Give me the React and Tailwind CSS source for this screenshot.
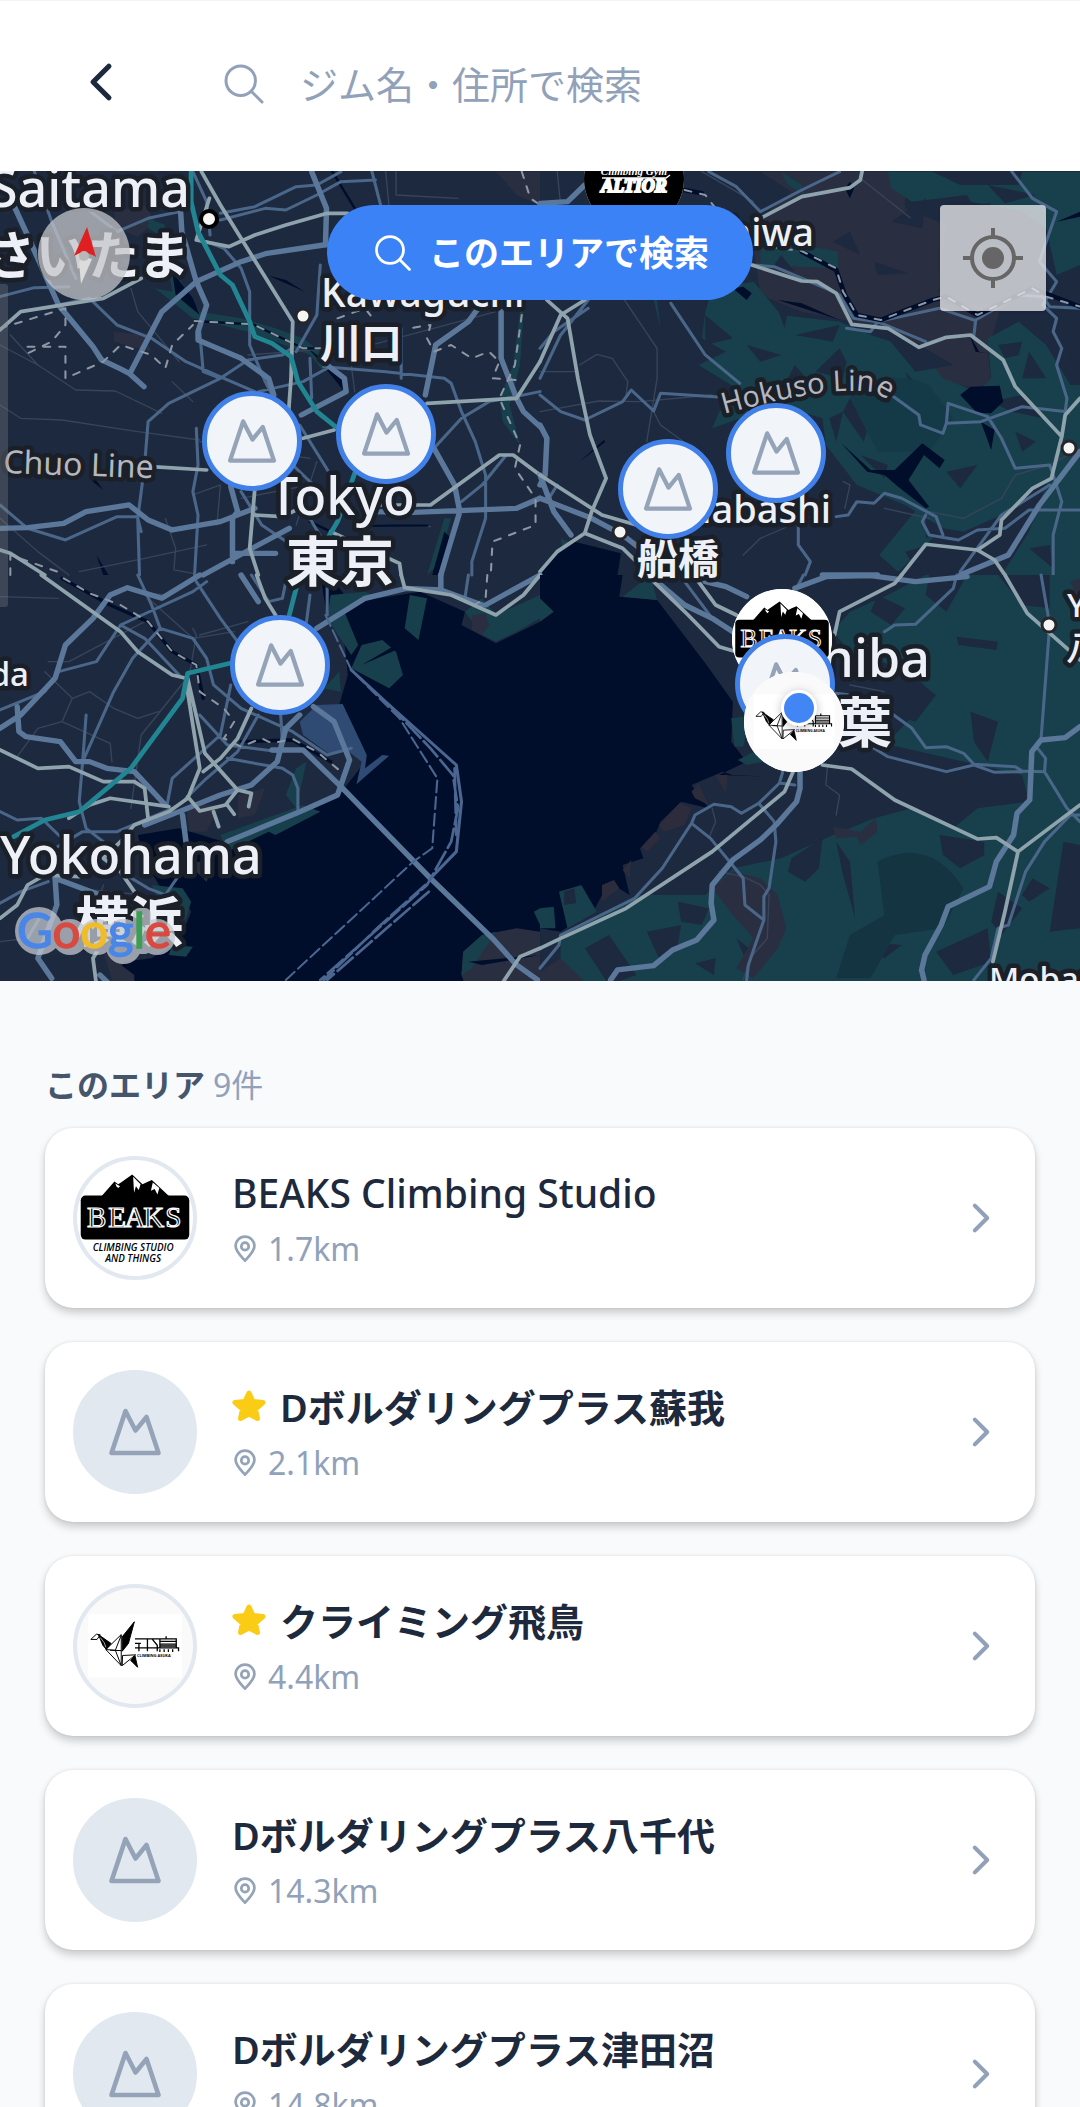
import React from "react";
import {
  IoChevronBack,
  IoChevronForward,
  IoSearchOutline,
} from "react-icons/io5";

const FONT = "font-['Noto_Sans','Noto_Sans_CJK_JP',sans-serif]";

const gyms = [
  { name: "BEAKS Climbing Studio", distance: "1.7km", logo: "beaks", latin: true },
  { name: "Dボルダリングプラス蘇我", distance: "2.1km", favorite: true },
  { name: "クライミング飛鳥", distance: "4.4km", logo: "asuka", favorite: true },
  { name: "Dボルダリングプラス八千代", distance: "14.3km" },
  { name: "Dボルダリングプラス津田沼", distance: "14.8km" },
];

const pins = [
  { x: 634, y: 8, name: "ALTIOR", logo: "altior" },
  { x: 252, y: 270, name: "東京西" },
  { x: 386, y: 263, name: "東京" },
  { x: 776, y: 282, name: "Dボルダリングプラス八千代" },
  { x: 668, y: 318, name: "Dボルダリングプラス津田沼" },
  { x: 280, y: 494, name: "品川" },
  { x: 782, y: 468, name: "BEAKS Climbing Studio", logo: "beaks" },
  { x: 785, y: 513, name: "Dボルダリングプラス蘇我" },
  { x: 794, y: 551, name: "クライミング飛鳥", logo: "asuka" },
];

function Mountain({ className }) {
  return (
    <svg viewBox="0 0 60 60" className={className} fill="none" stroke="#94a3b8" strokeWidth="4.6" strokeLinejoin="round" aria-hidden="true">
      <path d="M20.500 9 L30.500 28.500 L41.500 15 L53.500 51 H6.500 Z" />
    </svg>
  );
}

function PinIcon() {
  return (
    <svg viewBox="0 0 22 28" className="h-7 w-[22px]" fill="none" stroke="#94a3b8" strokeWidth="2.7" strokeLinejoin="round" aria-hidden="true">
      <path d="M11 25.6 C8.6 22.8 1.6 16.6 1.6 11 A9.4 9.4 0 0 1 20.4 11 C20.4 16.6 13.4 22.8 11 25.6 Z" />
      <circle cx="11" cy="11.4" r="3.7" />
    </svg>
  );
}

function Star() {
  return (
    <svg viewBox="0 0 36 36" className="size-9" fill="#facc15" stroke="#facc15" strokeWidth="5" strokeLinejoin="round" role="img" aria-label="お気に入り">
      <path d="M17 4 L21 12.500 L31 13.500 L23.500 20 L25.500 29.500 L17 25 L8.500 29.500 L10.500 20 L3 13.500 L13 12.500 Z" />
    </svg>
  );
}

function BeaksLogo() {
  return (
    <svg viewBox="0 0 124 124" className="size-full" aria-label="BEAKS">
      <rect width="124" height="124" fill="#fff" />
      <path d="M25 40 L40 23 L44 26 L47 24 L59 15.5 L70 26 L74 24 L80 21.5 L100 40 Z" />
      <path d="M60 18 L68 26 L66 32 L63 28 L61 35 Z M81 24 L88 30 L86 37 L83 31 L79 33 Z M41 25 L46 28 L44 30 L42 28 Z" fill="#fff" />
      <rect x="4" y="38" width="116" height="47" rx="5" />
      <text y="72" x="21 43 62 82 103" fontSize="31" fontFamily="Liberation Serif, serif" fill="#000" stroke="#fff" strokeWidth="1.3" textAnchor="middle">BEAKS</text>
      <text x="60" y="97" textAnchor="middle" fontSize="10.500" fontStyle="italic" fontFamily="Open Sans, sans-serif" fontWeight="600">CLIMBING STUDIO</text>
      <text x="60" y="109" textAnchor="middle" fontSize="10.500" fontStyle="italic" fontFamily="Open Sans, sans-serif" fontWeight="600">AND THINGS</text>
    </svg>
  );
}

function AsukaLogo() {
  return (
    <svg viewBox="24 12 372 372" className="size-full scale-105" aria-label="飛鳥">
      <rect x="0" y="0" width="400" height="400" fill="#fafafa" />
      <rect x="67" y="100" width="286" height="194" fill="#fff" />
      <g stroke="#000" strokeWidth="3" strokeLinejoin="round" fill="none">
        <path d="M75 178 L92 162 L104 164 L94 178 Z" />
        <path d="M98 163 L122 180 L137 190 L122 208 L112 196 Z" fill="#000" />
        <path d="M104 172 L116 188 L121 202" stroke="#fff" strokeWidth="2" />
        <path d="M168 163 L121 209 L168 258 Z M121 209 L150 211 L168 165 M150 211 L168 258 M134 211 L168 212" />
        <path d="M208 124 L171 170 V214 L190 190 Z" fill="#000" />
        <path d="M172 227 L212 225 L171 258 Z" />
        <path d="M197 242 L210 228 L218 263 Z" fill="#000" />
      </g>
      <g stroke="#000" strokeWidth="4" fill="none">
        <path d="M210 176 H284 M210 204 H345 M210 190 H228 M222 190 V214 M248 176 V214 M262 176 L278 196 V214 M286 178 V202 M284 176 H336 V204 M284 184 H336 M284 192 H336 M284 198 H336 M305 168 V176 M343 202 V214 M286 208 V216 M299 208 V216 M312 208 V216 M325 208 V216" />
      </g>
      <text x="216" y="232" fontSize="12" fontWeight="700" fontFamily="Open Sans, sans-serif">CLIMBING ASUKA</text>
    </svg>
  );
}

function AltiorLogo() {
  return (
    <svg viewBox="0 0 100 100" className="size-full" aria-label="ALTIOR">
      <rect width="100" height="100" />
      <text x="50" y="46" textAnchor="middle" fontSize="11" fontWeight="700" fontStyle="italic" fill="#fff" fontFamily="Liberation Serif, serif">Climbing Gym</text>
      <path d="M18 49 H82 L86 46" stroke="#fff" strokeWidth="1.5" fill="none" />
      <text x="50" y="63" textAnchor="middle" fontSize="18" fontWeight="700" fontStyle="italic" fill="#fff" stroke="#fff" strokeWidth="2" fontFamily="Liberation Serif, serif">ALTIOR</text>
    </svg>
  );
}

function Logo({ kind }) {
  if (kind === "beaks") return <BeaksLogo />;
  if (kind === "asuka") return <AsukaLogo />;
  return <AltiorLogo />;
}

function GymPin({ pin }) {
  const place = { left: `${(pin.x / 1080) * 100}%`, top: `${(pin.y / 810) * 100}%` };
  return pin.logo ? (
    <button aria-label={pin.name} style={place} className="absolute size-[100px] -translate-x-1/2 -translate-y-1/2 overflow-hidden rounded-full bg-white">
      <Logo kind={pin.logo} />
    </button>
  ) : (
    <button aria-label={pin.name} style={place} className="absolute flex size-[100px] -translate-x-1/2 -translate-y-1/2 items-center justify-center rounded-full border-[5px] border-[#4080e8] bg-slate-100">
      <Mountain className="size-14" />
    </button>
  );
}

function MapDrawing() {
  const thick = { stroke: "#5b7799", strokeWidth: 16 };
  const mid = { stroke: "#4a6688", strokeWidth: 9 };
  const rail = { stroke: "#8fa3ad", strokeWidth: 11 };
  const fine = { stroke: "#37445a", strokeWidth: 4 };
  const dash = { stroke: "#8d96a3", strokeWidth: 6, strokeDasharray: "20 26" };
  const teal = { stroke: "#218592", strokeWidth: 14 };
  return (
    <svg viewBox="0 171 1080 810" preserveAspectRatio="xMidYMid slice" className="block size-full" role="img" aria-label="地図">
      <rect y="171" width="1080" height="810" fill="#1c293f" />

      {/* north-west land */}
      <g transform="translate(0 165) scale(.3444 .3333)" fill="none" strokeLinejoin="round" strokeLinecap="round">
        <g stroke="none">
          <path fill="#2a2e41" d="M330 140 L420 120 450 170 400 215 340 190 Z M1440 20 L1568 20 1568 120 1500 90 Z M330 500 L420 510 440 560 330 530 Z" />
          <path fill="#17404c" d="M430 160 L480 180 470 215 430 190 Z M490 310 L520 340 580 440 700 460 800 490 880 520 930 560 940 620 900 570 800 530 720 500 560 460 450 370 500 380 Z M1510 440 L1520 440 1510 600 1480 720 1510 840 1460 770 1450 700 1490 600 Z M1290 1060 L1310 1060 1270 1200 1240 1230 Z" />
          <path fill="#000e2b" d="M500 320 L560 400 580 450 510 390 Z M780 332 L830 345 885 380 Z M260 920 L300 975 270 950 Z M890 545 L1005 640 1000 680 930 590 Z M280 1170 L315 1230 300 1230 Z M1290 1100 L1310 1120 1280 1230 1255 1230 Z" />
        </g>
        <g {...fine}>
          <path d="M0 720 L60 760 180 765 400 800 580 825 M0 540 L110 600 220 675 335 678 470 745 M30 510 L110 600 M720 570 L850 560 1080 540 1440 440 M1150 20 L1150 90 1330 100 M500 650 L560 710 M580 830 L700 850 900 880 M560 990 L640 960 630 1080 M0 1060 L110 1160 200 1230 M480 1060 L510 1150 505 1215 560 1225 M230 1220 L420 1180 600 1140 M1120 20 L1130 130 M380 370 L400 440 520 590 M700 1000 L900 960 M1020 600 L1030 680 M1080 1080 L1250 1085 M920 890 L860 1080" />
          <path stroke="#000e2b" strokeWidth="7" d="M965 20 L1030 130 M1080 1082 H1240 M900 1070 L960 1100 M565 468 L735 478 880 550 950 550" />
        </g>
        <g {...mid}>
          <path d="M0 395 L100 368 200 365 M100 20 L150 170 220 340 M640 145 L740 125 860 65 920 60 990 20 M640 165 L770 130 830 135 920 90 990 50 1090 45 M1080 20 L1110 140 M170 420 L260 400 340 480 440 520 540 590 650 640 740 680 M600 230 L650 250 700 310 725 380 725 540 770 650 795 700 M640 640 L490 715 430 770 420 900 400 1060 405 1230 M640 640 L720 585 820 570 845 550 M570 790 L575 900 560 980 575 1050 565 1230 M0 1020 L80 1090 190 1125 340 1055 400 1055 M940 605 L1120 620 1290 640 1310 655 1340 740 1380 830 1410 930 1410 1060 1370 1190 1370 1230 M1165 490 V640 M750 680 L880 650 950 610 M860 560 L920 450 930 300 M1260 850 L1340 760 1420 710 1568 680 M1470 870 L1400 960 1340 1010 M580 500 L590 620 640 640 M250 130 L340 200 430 160 520 140 M900 580 L905 700 M870 780 L930 880 960 930 M850 900 L920 970 M560 20 L600 110 610 210 M700 980 L760 1080 860 1150 M400 1060 L410 1100 M865 1000 L940 1130" />
        </g>
        <g {...thick}>
          <path d="M35 110 L75 200 170 420 270 545 295 585 350 612 375 625 418 665 M380 620 L410 560 470 440 570 350 700 290 775 265 940 240 M522 100 L528 200 570 350 600 420 575 500 575 525 620 545 700 580 780 640 795 690 M905 20 L948 130 945 240 M875 750 L1005 680 1000 640 950 600 M1235 690 L1265 540 1360 470 1410 400 M1455 440 V580 L1500 700 1520 740 1568 785 M1260 850 L1320 960 1335 1040 1300 1160 1280 1230 M0 1090 L80 1088 185 1075 250 1040 375 1020 430 1065 500 1095 640 1070 740 1030 M1070 1040 L1200 1042 1500 1030 1568 1000 M670 965 L690 1040 675 1060 675 1190 M680 1165 H800 M590 1230 L750 1140 840 1090" />
        </g>
        <g {...dash}>
          <path d="M0 490 L190 430 190 480 150 530 80 565 M80 545 H190 L190 640 300 590 350 540 440 570 480 610 500 540 560 480 M565 468 L735 478 880 550 950 550 M1515 20 L1540 100 1568 120 M980 460 L1060 430 1090 470 M1200 488 L1250 480 1240 520 1260 560 1310 540 1370 580 1420 560 1450 590 1430 640 1500 645 M1515 450 L1495 600 1450 700 1510 840 1495 910 1555 1000 1555 1080 1430 1130 1425 1230 M30 1230 V1170 L180 1225" />
        </g>
        <g {...rail}>
          <path d="M585 20 L640 120 850 470 845 640 838 740 M608 100 L570 225 665 245 740 210 830 180 950 145 1010 145 M0 495 L60 440 300 400 410 340 M880 820 L970 795 M1240 715 L1500 700 1568 590 M1100 1020 H1250 L1450 870 1490 870 1568 930 M440 905 L600 915 M740 970 L725 1150 750 1230 M740 1050 L820 1055 870 1030 M0 1155 L30 1165 130 1230 M960 1100 L1160 1195 1165 1230" />
        </g>
        <g {...teal}>
          <path d="M555 20 V110 L575 200 640 330 675 360 725 470 740 515 790 535 845 575 865 650 920 740 980 790 M1030 925 L980 1070 940 1140 870 1230" />
        </g>
      </g>

      {/* north-east hills */}
      <g transform="translate(540 165) scale(.3444 .3333)" fill="none" strokeLinejoin="round" strokeLinecap="round">
        <g stroke="none">
          <path fill="#2a2e41" d="M640 20 L1010 20 1060 60 1060 130 1180 180 1160 380 1180 420 1340 420 1300 560 1310 650 1270 670 1170 650 1110 540 1000 490 910 470 760 440 640 390 620 250 640 160 730 80 Z" />
          <path fill="#17404c" d="M700 20 L760 60 770 90 720 60 Z M1010 20 H1568 V300 L1500 330 1470 190 1400 140 1250 110 1240 90 1080 110 1020 70 Z M640 180 L720 230 865 260 865 310 640 300 Z M330 405 L350 490 340 405 Z M500 370 L620 350 700 450 870 470 960 510 1110 560 1170 640 1270 680 1310 640 1300 520 1390 470 1470 540 1540 660 1568 660 V1030 L1470 940 1340 1050 1230 1100 1170 1090 1060 1020 920 960 830 840 820 760 690 720 500 790 520 740 600 690 540 650 460 600 540 560 470 520 480 440 Z M985 1170 L1120 1000 1120 1120 1150 1110 1040 1220 Z M1490 900 L1568 850 V1230 H1340 L1420 1100 Z M60 1120 L150 1160 140 1210 70 1180 Z" />
          <path fill="#1c293f" d="M470 20 L560 20 620 110 590 120 Z M480 450 L560 520 480 540 Z M690 430 L720 440 710 490 Z M740 510 L870 480 850 530 Z M870 550 L890 590 880 640 800 620 Z M900 700 L960 760 940 830 880 740 Z M1010 520 L1060 515 1200 600 1090 620 Z M1140 20 L1400 20 1390 60 1220 60 Z M1060 620 L1130 700 1100 720 Z M1330 540 L1400 530 1390 570 1350 580 Z M1420 560 L1470 640 1400 640 Z M1310 710 L1400 690 1460 760 1370 740 Z M840 760 L880 740 860 830 Z M930 870 L1010 900 1000 940 Z M1180 920 L1270 900 1220 970 Z M1380 800 L1440 830 1400 860 Z M1060 1160 L1130 1140 1100 1230 Z M1420 1150 L1480 1140 1490 1210 Z M1300 60 L1440 90 1350 115 Z M1240 180 L1240 120 1310 115 Z M1500 420 L1568 480 1540 580 Z M600 540 L700 570 640 590 Z M740 600 L790 660 720 640 Z M660 700 L730 660 740 700 Z M900 200 L930 270 850 230 Z M970 290 L1070 325 980 330 Z M1020 170 L1120 100 1110 190 Z M700 270 L740 320 680 300 Z" />
          <path fill="#153a47" d="M900 700 Q1000 600 1130 660 L1200 760 1130 860 980 860 Z" />
          <path fill="#000e2b" d="M690 405 L760 415 870 465 Z M900 50 L912 70 900 100 885 70 Z M1220 690 L1250 665 1335 662 1345 710 1310 745 1270 745 Z M875 835 L960 915 1030 915 1110 835 1175 885 1160 910 1115 870 1070 945 1130 1025 1120 1030 1040 965 1000 930 950 920 Z M1280 770 L1320 795 1310 855 Z M560 370 L590 365 615 385 600 405 Z M115 890 L185 825 190 830 Z M0 1230 L50 1160 100 1130 235 1165 225 1230 Z M1500 170 L1568 140 1568 155 Z M1245 505 L1275 560 1300 565 1265 560 Z" />
        </g>
        <g {...fine}>
          <path d="M245 405 L340 550 340 640 310 830 M115 600 L165 568 210 580 255 650 250 690 M0 740 L170 708 290 710 500 690 M330 740 L350 780 430 840 M0 620 L110 620 M930 40 L1075 158 M880 950 L900 960 885 1030 M590 1170 L640 1120 820 1040 M1130 1040 L1230 1060 1340 1000 1380 930 1480 900 1568 850 M50 20 L60 120 M470 20 L620 110 M1000 1030 L1130 1060" />
        </g>
        <g {...mid}>
          <path d="M0 690 L60 740 130 765 240 710 265 675 330 738 350 685 530 697 M380 415 L480 570 580 655 M490 20 L570 65 640 140 760 75 870 20 M620 300 L680 305 830 370 870 390 910 460 980 470 1160 430 1260 465 M890 490 L960 500 980 470 M980 470 L1120 530 M1260 510 L1265 465 1390 390 1460 395 1480 425 1568 430 M1370 20 L1430 100 1500 140 1450 290 1500 350 1460 420 1500 460 1490 500 1515 550 1500 600 1530 700 1525 740 M1020 690 L1100 750 1105 780 1170 805 1180 775 1280 770 1400 725 1530 740 M1180 775 L1185 715 1300 755 1340 820 1380 910 1480 900 1490 930 1515 1010 1490 1110 1490 1230 M860 1055 L895 1050 920 1010 970 1015 1000 985 1050 1000 1150 1055 1170 1110 M1120 1050 L1110 1070 1130 1110 1215 1125 1270 1095 1350 1090 1420 1035 1568 1035 M750 1080 V1140 L785 1190 770 1230 M0 550 L40 500 140 430 M140 405 L60 510 0 640 M1220 1220 L1340 1050 1480 960 M20 1010 L50 960" />
        </g>
        <g {...thick}>
          <path d="M0 115 L80 110 130 60 M0 780 L20 820 15 930 0 960 M0 930 L40 1040 90 1110 M0 1000 L150 1060 240 1110 290 1150 M820 1230 H980 M1568 860 L1450 1020 1360 1170 1220 1230" />
        </g>
        <g stroke="#000e2b" strokeWidth="14">
          <path d="M760 260 L860 315 885 390 920 450 990 465 1140 405 1180 395 1270 450 1430 370 1568 425 M420 75 L470 85" />
        </g>
        <g {...dash}>
          <path d="M420 75 L480 90 510 130 M620 240 L760 258 860 310 880 380 920 450 990 465 1140 405 1180 395 1270 450 1430 370 1470 395 1568 425" />
        </g>
        <g {...rail}>
          <path d="M935 20 L930 45 900 68 760 95 640 160 M615 300 L760 348 805 350 860 385 905 478 1010 490 1100 547 1180 517 1250 510 1345 585 1380 665 1515 815 1525 750 1568 700 M20 405 L80 460 110 640 145 810 192 940 150 1040 130 1105 M0 590 L60 450 130 405 M1515 815 L1485 940 1430 970 1340 1065 1335 1110 1270 1155 1120 1138 1050 1230 M0 930 L180 1050 280 1080 M0 1220 L50 1160 130 1105 240 1150 280 1190 M1270 1155 L1320 1185 1350 1230" />
        </g>
      </g>

      {/* bay, south-west */}
      <g transform="translate(0 575) scale(.3444 .3333)" fill="none" strokeLinejoin="round" strokeLinecap="round">
        <g stroke="none">
          <path fill="#000e2b" d="M930 0 L950 130 1000 200 1010 300 985 390 1060 560 985 660 880 710 820 740 650 800 520 760 400 780 420 860 480 960 530 960 555 1010 520 1100 440 1150 360 1160 330 1230 H1568 V140 L1440 205 1340 150 1350 110 1220 50 1100 70 1000 60 960 0 Z" />
          <path fill="#17404c" d="M960 60 L1060 50 1080 60 1000 110 1040 210 1020 240 950 130 Z M1190 60 L1240 70 1215 195 1175 160 Z M1020 280 L1050 210 1110 195 1150 230 1170 300 1130 340 Z M1350 110 L1400 70 1440 120 1568 60 1568 130 1500 170 1440 200 1400 180 Z M640 780 L880 690 930 710 800 780 780 770 660 830 Z M440 930 L530 940 555 980 540 1030 500 1060 Z M500 1110 L560 1115 540 1145 490 1140 Z M860 580 L890 560 860 700 830 660 Z M985 290 L990 350 940 340 Z" />
          <path fill="#2a2e41" d="M1340 1200 L1345 1130 1400 1080 1500 1060 1568 1070 V1230 H1350 Z M540 690 L640 690 600 770 550 770 Z M690 660 L770 640 740 720 690 730 Z M540 860 L620 860 600 920 Z M300 1130 L390 1200 390 1230 330 1230 Z M1370 120 L1410 115 1420 150 1400 180 1370 165 Z" />
          <path fill="#17404c" d="M1340 1200 L1345 1130 1400 1080 1440 1070 1370 1180 Z M1550 1010 L1568 1000 V1050 Z" />
          <path fill="#000e2b" d="M1360 1160 L1568 1140 1400 1170 Z M1050 270 L1150 225 1140 215 Z" />
          <path fill="#2f4a73" d="M870 440 L920 390 995 387 1065 540 1060 580 1110 540 1130 542 1035 628 1050 560 1000 520 960 540 880 480 Z" />
        </g>
        <g {...fine}>
          <path d="M0 65 L170 70 M130 290 L210 370 260 350 330 400 400 430 460 410 M180 440 L320 505 325 560 M50 545 L110 460 180 440 210 370 M420 60 L560 190 680 170 M560 160 L570 180 550 300 410 480 380 700 M140 260 L200 260 420 140 M580 180 L720 140 M390 50 L480 60 M0 1100 L80 1090 M220 940 L420 960 M280 1000 L300 930" />
        </g>
        <g stroke="#000e2b" strokeWidth="10">
          <path d="M180 10 L320 90 430 140 500 230 570 270 590 370 M700 500 L850 495 960 560" />
        </g>
        <g {...mid}>
          <path d="M400 0 L440 90 465 160 385 250 330 350 240 560 230 680 250 760 300 800 M0 405 L130 350 170 290 280 260 350 150 560 50 600 20 M570 20 L640 130 690 200 M350 150 L420 190 520 300 M465 160 L560 190 600 250 620 330 700 400 850 470 950 540 1020 520 M670 330 L640 480 500 610 485 690 M580 420 L660 510 810 530 M660 550 L820 580 850 600 865 640 V710 M750 420 L690 530 600 610 540 670 M0 710 L50 735 120 730 180 790 M160 820 L240 770 340 770 500 700 M350 890 L430 940 480 960 520 900 M0 985 L60 950 140 920 M815 420 L820 500 M900 60 L890 140 M950 0 V120 M1360 0 L1350 70 M240 560 L250 420 M730 0 L780 80 820 70 830 20 M120 1020 L80 1090" />
        </g>
        <g {...thick}>
          <path d="M580 0 L470 70 370 38 320 60 270 130 190 210 160 310 60 420 0 460 M50 395 L55 470 75 485 175 500 220 560 260 560 310 580 390 590 480 690 M920 160 L1060 70 1180 40 1280 45 1400 90 M1280 0 V45 M1410 90 L1568 0 M910 395 L970 440 1015 555 980 660 860 715 660 800 M870 420 L830 460 805 560 730 630 640 660 520 710 420 750 M790 525 H880 L990 635 1250 910 1430 1090 1500 1170 1568 1220 M530 720 L540 800 M700 0 L750 80 M160 910 L165 990 110 1150 150 1210 M160 910 L290 960 M290 1200 L320 1230" />
        </g>
        <g {...dash}>
          <path d="M185 10 L260 55 350 90 430 140 500 230 570 270 580 350 650 400 680 440 650 490 700 515 760 490 790 505 850 492 920 530 990 590 M1415 0 L1410 70 1360 100" />
        </g>
        <g stroke="#4b6690" strokeWidth="6">
          <path strokeDasharray="36 14" d="M945 120 L1020 285 1160 430 1270 610 1255 820 1200 860 830 1215" />
          <path strokeWidth="9" d="M1020 285 L1130 390 1260 510 1325 570 1340 680 1325 830 1250 910" />
          <path strokeWidth="8" strokeDasharray="60 14" d="M1130 390 L1250 520 1315 600 1330 700 1310 800 1240 930 930 1215 M1245 950 L950 1215 M1235 930 L1100 1055 940 1215 M1320 580 L1325 780" />
        </g>
        <g {...rail}>
          <path d="M120 0 L350 170 400 230 500 300 540 310 M745 0 L770 70 800 120 M730 400 L690 490 640 550 590 590 M540 320 L580 580 545 670 490 710 390 750 M545 310 L595 535 690 645 730 655 722 695 M0 525 L110 580 200 575 300 620 390 620 420 640 430 730 M200 730 L260 690 320 670 490 695 M545 665 L580 708 655 690 690 645 M620 710 L635 755 M660 690 L680 718 M390 750 L350 800 300 850 350 890 390 950 M0 1030 L50 990 80 930 130 900 230 905 M1165 0 L1175 38 1310 60 1440 120 1520 60 1568 0 M1455 1230 L1510 1145 1568 1120 M300 1100 L270 1150 280 1230" />
        </g>
        <g {...teal}>
          <path d="M870 0 L840 120 M680 262 L545 295 530 370 380 580 230 710 130 735 40 785" />
        </g>
      </g>

      {/* peninsula, south-east */}
      <g transform="translate(540 575) scale(.3444 .3333)" fill="none" strokeLinejoin="round" strokeLinecap="round">
        <g stroke="none">
          <path fill="#17404c" d="M850 170 L900 110 1010 60 1120 0 H1568 V1230 H60 L60 1100 140 1040 280 960 480 960 560 880 700 850 830 790 970 730 1080 700 1020 620 1030 480 1140 360 1080 290 900 230 Z" />
          <path fill="#1c293f" d="M980 60 L1060 100 1020 150 960 110 Z M1130 0 L1240 0 1180 110 1120 60 Z M1330 0 L1480 0 1480 100 1400 90 Z M1210 185 L1330 200 1325 225 1215 210 Z M1250 410 L1330 440 1300 560 1260 500 Z M900 330 L1100 320 1150 360 1090 440 1000 410 Z M880 480 L1060 520 1400 600 1420 680 1270 700 1200 760 1060 690 940 620 860 600 Z M1160 780 L1290 800 1290 840 1220 880 1170 840 Z M860 800 L900 860 915 1030 880 900 Z M730 850 L820 790 810 880 770 920 720 890 Z M1520 800 L1568 810 V1060 L1480 1070 Z M1060 1010 L1085 1060 1035 1055 Z M1430 910 L1480 940 1420 980 1400 960 Z M1330 950 L1400 1000 1340 1080 1310 1040 Z M1150 1130 L1300 1060 1310 1160 1200 1200 Z M940 1100 L1050 1110 1000 1150 Z M450 1165 L510 1150 505 1200 Z M310 1070 L410 1050 400 1110 350 1160 Z M570 1090 L620 1130 600 1160 Z M130 1120 L200 1080 280 1200 200 1230 Z M400 980 L490 1000 470 1050 410 1040 Z" />
          <path fill="#153441" d="M980 860 Q1130 780 1230 940 L1170 1060 1030 1080 960 1210 H860 L900 1080 1000 1020 Z" />
          <path fill="#2a2e41" d="M850 755 L930 770 975 730 980 770 930 810 920 785 860 790 Z M500 940 L560 890 640 910 690 960 715 1060 690 1120 620 1210 570 1180 620 1090 560 1020 Z M0 1190 L60 1150 140 1230 H0 Z M1540 20 L1568 10 V80 Z" />
          <path fill="#000e2b" d="M0 0 H240 L230 65 340 75 480 265 560 380 555 500 600 560 520 600 660 605 560 600 530 590 440 630 490 700 410 680 350 740 330 790 290 820 300 850 240 870 260 960 200 920 160 1000 60 1070 0 1060 Z" />
          <path fill="#17404c" d="M240 65 L320 0 340 75 Z M0 70 L40 110 0 140 Z M55 950 L120 930 165 1010 80 1060 Z M555 430 L590 425 600 470 590 515 565 515 Z M575 555 L620 530 650 560 600 570 Z M0 1000 L40 995 45 1060 0 1060 Z" />
          <path fill="#1c293f" d="M70 950 L100 940 105 985 70 990 Z" />
          <path fill="#2c2c3c" d="M440 650 L460 625 490 690 450 670 Z M345 750 L405 685 440 700 420 750 360 770 Z M295 815 L335 770 350 790 310 830 Z M240 885 L265 855 260 910 Z M180 930 L215 915 230 940 180 980 Z M510 600 L545 600 540 655 Z" />
        </g>
        <g {...fine}>
          <path d="M835 570 L830 630 870 660 860 720 M520 890 L590 905 640 930 665 960 660 1090 610 1150 590 1215 M500 700 L510 740 490 790 M900 330 L1000 350" />
        </g>
        <g {...mid}>
          <path d="M420 20 L500 130 560 170 M765 0 L740 50 M1000 170 L1030 150 1090 148 1200 40 1210 0 M860 355 L940 365 1000 400 1080 460 1120 518 1180 515 1230 535 1260 568 1380 575 1400 588 1465 590 1530 700 1568 740 M970 520 L1010 545 1180 590 1260 570 1320 592 1400 590 M1465 590 L1468 550 1445 520 M1455 0 L1480 150 1455 490 M705 590 L695 625 635 685 585 715 555 695 505 688 450 720 440 745 355 880 275 970 60 1080 55 1110 0 1180 M440 745 L495 790 590 910 595 990 650 1035 M635 685 L680 740 685 800 665 940 650 965 650 1035 605 1170 600 1215 M700 625 L740 630 M1540 720 L1465 800 1410 890 1360 1050 1330 1060 1310 1150 1260 1215 M1540 720 H1568" />
        </g>
        <g {...thick}>
          <path d="M340 20 L420 90 500 130 560 170 M480 20 L540 35 600 65 M740 40 L830 5 960 2 1090 20 1240 5 M755 590 V640 L745 680 690 745 640 795 560 855 500 930 497 985 505 1035 455 1095 385 1125 330 1172 225 1185 205 1215 M1568 455 L1525 488 1455 495 1428 530 1422 675 1385 715 1375 780 1325 860 1305 935 1185 995 1165 1050 1118 1140 1108 1185 1115 1215" />
        </g>
        <g {...rail}>
          <path d="M330 20 L430 120 520 215 570 230 M460 20 L510 90 570 120 M1050 0 L1030 25 870 110 855 180 M1350 0 L1415 115 1568 255 M735 590 L710 650 500 830 250 1000 60 1090 0 1120 M820 570 L905 582 1030 675 1270 792 1325 788 1388 830 1568 690 M1388 830 L1350 1010 1315 1160" />
        </g>
      </g>

      {/* towns */}
      <g fill="#f5f5f5" stroke="#26262a" strokeWidth="3">
        <circle cx="209" cy="219" r="8" stroke="#000" strokeWidth="4" />
        <circle cx="303" cy="316" r="7" />
        <circle cx="1069" cy="448" r="7" />
        <circle cx="620" cy="532" r="7" />
        <circle cx="1049" cy="625" r="7" />
      </g>

      {/* labels */}
      <g fill="#eef0f7" stroke="#1b1f28" strokeWidth="9" strokeLinejoin="round" paintOrder="stroke" fontFamily="Noto Sans, Noto Sans CJK JP, sans-serif" fontWeight="500">
        <text x="190" y="207" fontSize="52" textAnchor="end">Saitama</text>
        <text x="190" y="275" fontSize="52" textAnchor="end" fontWeight="700">さいたま</text>
        <text x="321" y="307" fontSize="39">Kawaguchi</text>
        <text x="320" y="358" fontSize="41" fontWeight="700">川口</text>
        <text x="814" y="246" fontSize="38" textAnchor="end">Kashiwa</text>
        <text x="269" y="515" fontSize="52">Tokyo</text>
        <text x="286" y="582" fontSize="54" fontWeight="700">東京</text>
        <text x="831" y="523" fontSize="38" textAnchor="end">Funabashi</text>
        <text x="637" y="574" fontSize="41" fontWeight="700">船橋</text>
        <text x="930" y="677" fontSize="52" textAnchor="end">Chiba</text>
        <text x="892" y="743" fontSize="54" textAnchor="end" fontWeight="700">千葉</text>
        <text x="0" y="874" fontSize="52">Yokohama</text>
        <text x="75" y="942" fontSize="54" fontWeight="700">横浜</text>
        <text x="29" y="686" fontSize="33" textAnchor="end">da</text>
        <text x="989" y="991" fontSize="33">Mobara</text>
        <text x="1067" y="617" fontSize="33">Y</text>
        <text x="1066" y="660" fontSize="34">八</text>
        <g fill="#b4b7bf" fontWeight="400">
          <text x="3" y="473" fontSize="32" transform="rotate(2 3 473)">Chuo Line</text>
          <path id="hokuso" d="M724 414 C760 404 810 392 845 391 S876 394 898 406" fill="none" stroke="none" />
          <text fontSize="29"><textPath href="#hokuso">Hokuso Line</textPath></text>
        </g>
      </g>

      {/* scroll strip */}
      <rect x="-8" y="284" width="16" height="323" rx="3" fill="#8a8a8a" fillOpacity=".3" />

      {/* compass */}
      <circle cx="84" cy="254" r="46" fill="#c4c6c9" fillOpacity=".75" />
      <path d="M87 227 L96 257 Q84 249 74 256 Z" fill="#e02020" />
      <path d="M84 257 L92 259 L81 284 L79 262 Z" fill="#dcdcdc" />
      <circle cx="84" cy="256" r="5" fill="#b8b8b8" />

      {/* provider mark */}
      <g fill="#c3c8d0" opacity=".75">
        <circle cx="39" cy="931" r="24" />
        <circle cx="70" cy="937" r="18" />
        <circle cx="97" cy="937" r="18" />
        <rect x="106" y="919" width="35" height="45" rx="17" />
        <rect x="133" y="908" width="18" height="46" rx="6" />
        <circle cx="157" cy="937" r="18" />
      </g>
      <text x="17" y="948" fontFamily="Lato, sans-serif" fontSize="49" strokeWidth="1.5">
        <tspan fill="#4a86e8" stroke="#4a86e8">G</tspan><tspan fill="#d84a3f" stroke="#d84a3f">o</tspan><tspan fill="#f0bc2a" stroke="#f0bc2a">o</tspan><tspan fill="#4a86e8" stroke="#4a86e8">g</tspan><tspan fill="#3b9e54" stroke="#3b9e54">l</tspan><tspan fill="#d84a3f" stroke="#d84a3f">e</tspan>
      </text>
    </svg>
  );
}

function MapPanel() {
  return (
    <section className="relative aspect-[4/3] w-full overflow-hidden">
      <MapDrawing />
      {pins.map((pin) => (
        <GymPin key={`${pin.x}-${pin.y}`} pin={pin} />
      ))}
      <span className="absolute left-[74%] top-[66.3%] size-9 -translate-x-1/2 -translate-y-1/2 rounded-full border-[3px] border-white bg-[#4285f4] shadow-[0_2px_10px_rgba(0,0,0,0.25)]" />
      <button className="absolute left-1/2 top-[34px] flex h-[95px] w-[426px] -translate-x-1/2 items-center justify-center gap-3.5 whitespace-nowrap rounded-full bg-[#3b82f6] text-[35px] font-bold leading-none text-white">
        <IoSearchOutline className="size-11" />
        このエリアで検索
      </button>
      <button aria-label="現在地" className="absolute right-[34px] top-[34px] flex size-[106px] items-center justify-center rounded-sm bg-[#e4e4e6]/80 shadow">
        <svg viewBox="0 0 60 60" className="size-[60px]" fill="none" stroke="#666" strokeWidth="4" aria-hidden="true">
          <circle cx="30" cy="30" r="21" />
          <circle cx="30" cy="30" r="11" fill="#666" stroke="none" />
          <path d="M30 0 V9 M30 51 V60 M0 30 H9 M51 30 H60" />
        </svg>
      </button>
    </section>
  );
}

function GymCard({ gym }) {
  return (
    <li>
      <a href="#" className="flex h-[180px] items-center gap-[35px] rounded-[28px] bg-white pl-7 pr-8 shadow-[0_5px_9px_rgba(0,0,0,0.19),0_0_3px_rgba(0,0,0,0.1)]">
        <span className="flex size-[124px] shrink-0 items-center justify-center overflow-hidden rounded-full border-4 border-slate-200 bg-slate-200">
          {gym.logo ? <Logo kind={gym.logo} /> : <Mountain className="size-[60px]" />}
        </span>
        <span className="flex min-w-0 grow flex-col gap-1.5 pt-1">
          <span className="flex items-center gap-3 leading-[52px] text-slate-800">
            {gym.favorite && <Star />}
            <span className={gym.latin ? "truncate text-[39px] font-medium" : "truncate text-[38px] font-semibold"}>{gym.name}</span>
          </span>
          <span className="flex items-center gap-3 pl-0.5 text-[32px] leading-[48px] text-slate-400">
            <PinIcon />
            {gym.distance}
          </span>
        </span>
        <IoChevronForward className="size-11 shrink-0 text-slate-400" />
      </a>
    </li>
  );
}

export default function App() {
  return (
    <div className={`${FONT} h-screen overflow-hidden bg-slate-50`} lang="ja">
      <header className="flex h-[171px] items-center border-t border-gray-100 bg-white px-[73px] pb-1">
        <button aria-label="戻る" className="pb-1 text-slate-800">
          <IoChevronBack className="size-14" />
        </button>
        <label className="ml-[91px] flex grow items-center gap-8 text-slate-400">
          <IoSearchOutline className="size-12 shrink-0" />
          <input
            type="search"
            aria-label="ジム名・住所で検索"
            placeholder="ジム名・住所で検索"
            className="w-full bg-transparent text-[38px] leading-[56px] outline-none placeholder:text-slate-400"
          />
        </label>
      </header>
      <MapPanel />
      <main className="px-[45px] pt-20">
        <h1 className="flex items-baseline gap-2 text-[32px] font-bold leading-[48px] text-slate-600">
          このエリア
          <span className="font-normal text-slate-400">9件</span>
        </h1>
        <ul className="mt-[19px] flex flex-col gap-[34px]">
          {gyms.map((gym) => (
            <GymCard key={gym.name} gym={gym} />
          ))}
        </ul>
      </main>
    </div>
  );
}
